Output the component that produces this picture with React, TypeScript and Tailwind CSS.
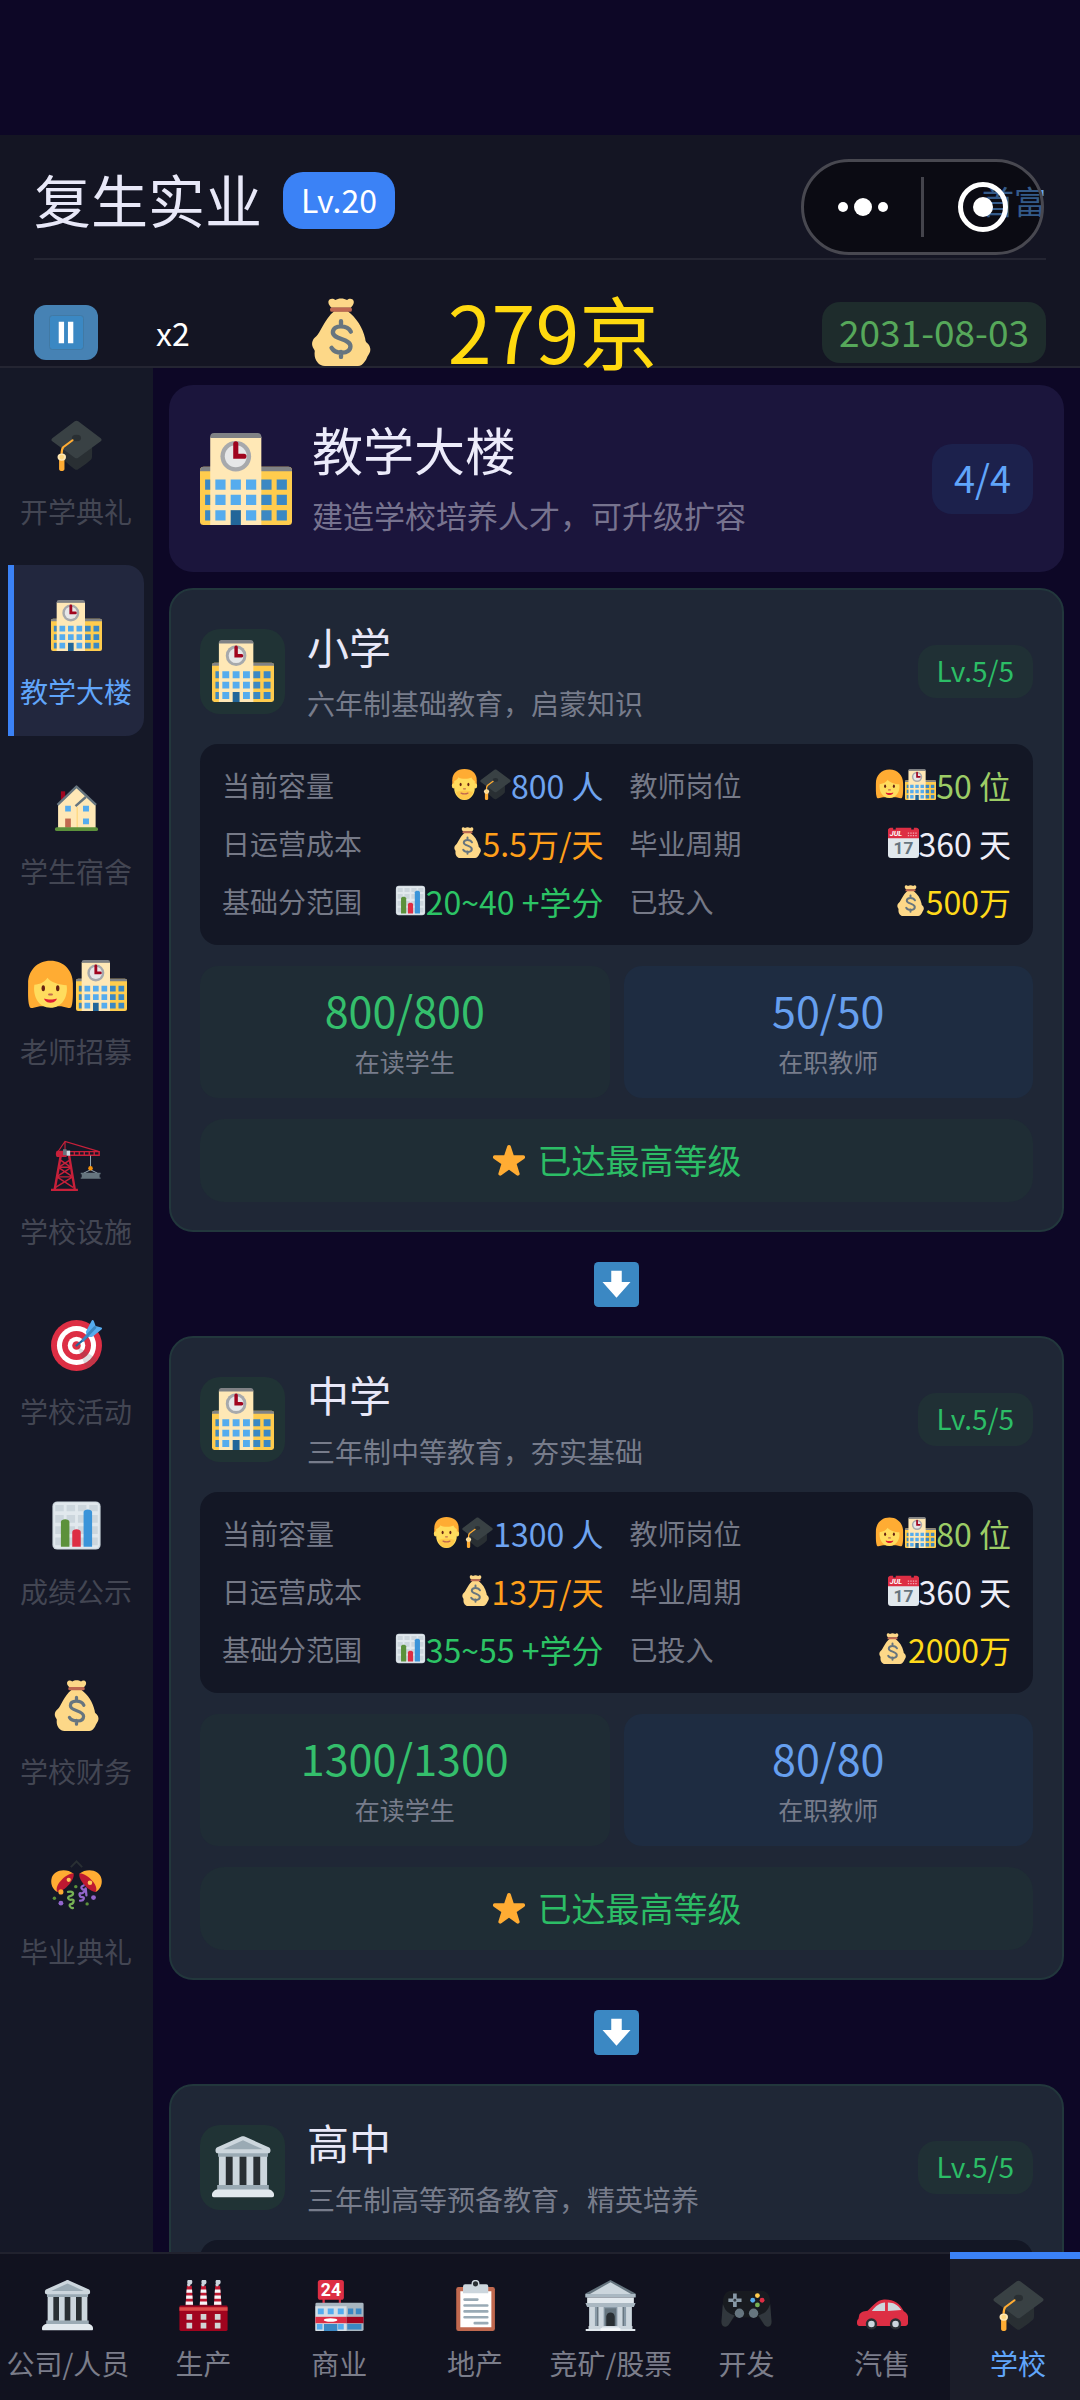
import React from "react";

type IconProps = { className?: string };
type Icon = (props: IconProps) => React.ReactElement;

function Glyph({ className, children }: { className?: string; children: React.ReactNode }) {
  return (
    <svg viewBox="0 0 36 36" className={className} aria-hidden="true">
      {children}
    </svg>
  );
}

const CapIcon: Icon = ({ className }) => (
  <Glyph className={className}>
    <path fill="#292F33" d="M7 17v9c0 1.200 9 8.300 10 8.900.700.400 1.400.400 2 0 1-.600 8.700-6 9.600-7.400.500-.900.300-2 .400-3.500V16z" />
    <path fill="#394144" d="M16.800.900.900 12.800c-.800.600-.800 1.600 0 2.200l15.900 11.600c.700.500 1.700.500 2.400 0L35.100 15c.800-.600.800-1.600 0-2.200L19.200.900c-.700-.500-1.700-.500-2.400 0z" />
    <ellipse cx="18" cy="12.700" rx="3.200" ry="2.300" fill="#292F33" />
    <path fill="none" stroke="#FFAC33" strokeWidth="1.500" strokeLinecap="round" d="M15.200 14.300 8.600 19.200Q7.500 20.500 7.500 24" />
    <path fill="#FFAC33" d="M5.700 27h3.800v7.500c0 2-3.800 2-3.800 0z" />
    <ellipse cx="7.600" cy="26.200" rx="3" ry="2.600" fill="#FFE8B6" />
    <circle cx="7.600" cy="26.200" r="1.700" fill="#FFD983" />
  </Glyph>
);

const SchoolIcon: Icon = ({ className }) => (
  <Glyph className={className}>
    <rect y="13.200" width="36" height="22.800" rx="1.400" fill="#FFCC4D" />
    <path fill="#808285" d="M1.500 13.200h33A1.500 1.500 0 0 1 36 14.700V15H0v-.300a1.500 1.500 0 0 1 1.500-1.500z" />
    <path fill="#FFE8B6" d="M4 1.500h20V36H4z" />
    <path fill="#808285" d="M5.500 0h17A1.500 1.500 0 0 1 24 1.500V2H4v-.500A1.500 1.500 0 0 1 5.500 0z" />
    <circle cx="14" cy="9.100" r="6" fill="#A7A9AC" />
    <circle cx="14" cy="9.100" r="4.300" fill="#E6E7E8" />
    <path fill="none" stroke="#A0041E" strokeWidth="2" strokeLinecap="round" d="M14 4.200v4.900h3.200" />
    <path fill="#3B88C3" d="M2 18.200h2v4H2zM24 18.200h4v4h-4zM30 18.200h4v4h-4zM2 24.200h2v4H2zM24 24.200h4v4h-4zM30 24.200h4v4h-4zM2 30.200h2v4H2zM24 30.200h4v4h-4zM30 30.200h4v4h-4z" />
    <path fill="#55ACEE" d="M6 18.200h4v4H6zM12 18.200h4v4h-4zM18 18.200h4v4h-4zM6 24.200h4v4H6zM12 24.200h4v4h-4zM18 24.200h4v4h-4zM6 30.200h4v4H6zM18 30.200h4v4h-4z" />
    <path fill="#269" d="M12 30.200h4V36h-4z" />
  </Glyph>
);

const HouseIcon: Icon = ({ className }) => (
  <Glyph className={className}>
    <path fill="#A0041E" d="M7 8h3v7H7z" />
    <path fill="#FFE8B6" d="M5 17 18 5l13.500 12v17H5z" />
    <path fill="#FFD983" d="M18 19h1v15h-1z" />
    <path fill="none" stroke="#66757F" strokeWidth="1.700" strokeLinejoin="round" d="m4.600 17.600L18 4.600l13.800 13" />
    <path fill="none" stroke="#66757F" strokeWidth="1.700" d="m17.300 18.400 7.300-6.400" />
    <path fill="#55ACEE" d="M10 18.200h4v4h-4zM22.600 18.200h4.200v4h-4.200zM22.600 27.200h4.200v4h-4.200z" />
    <path fill="#C1694F" d="M10 27.200h4v6.500h-4z" />
    <rect x="2.800" y="33.300" width="30.400" height="2.700" rx="1.300" fill="#5C913B" />
  </Glyph>
);

const WomanIcon: Icon = ({ className }) => (
  <Glyph className={className}>
    <path fill="#FFAC33" d="M18 .500C8.500.500 2.200 7.500 2.200 16.500c0 6-.300 12 .900 16 .300 1.200 1 1.600 2.200 1.400l5.200-1.200h15l5.200 1.200c1.200.200 1.900-.200 2.200-1.400 1.200-4 .900-10 .900-16C33.800 7.500 27.500.500 18 .500z" />
    <path fill="#FFDC5D" d="M6.600 17.500c4-.200 8-2.500 9.200-5 2 3.200 8.500 5 13.600 5.300 1.200 7.700-2.900 15.900-11.400 15.900S5.400 25.500 6.600 17.500z" />
    <ellipse cx="12.900" cy="20" rx="1.200" ry="2.100" fill="#662113" />
    <ellipse cx="23.100" cy="20" rx="1.200" ry="2.100" fill="#662113" />
    <path fill="none" stroke="#C1694F" strokeWidth="1.400" strokeLinecap="round" d="M17 24.300h2" />
    <path fill="#DF1F32" d="M13.800 27.200c2 .900 6.400.900 8.400 0 .700.400-.900 3-4.200 3s-4.900-2.600-4.200-3z" />
  </Glyph>
);

const ManIcon: Icon = ({ className }) => (
  <Glyph className={className}>
    <path fill="#FFAC33" d="M18 0C9 0 3.800 5.500 3.800 13v7h28.400v-7C32.200 5.500 27 0 18 0z" />
    <ellipse cx="5.300" cy="19.500" rx="2" ry="3" fill="#FFDC5D" />
    <ellipse cx="30.700" cy="19.500" rx="2" ry="3" fill="#FFDC5D" />
    <path fill="#FFDC5D" d="M6 14c3-1 4.500-3 5-4.500 2 2.200 11 2.800 15 .500 1 2 2.500 3.500 4 4v8c0 8-5.500 14-12 14S6 30 6 22z" />
    <path fill="#FFC84A" d="M8 26c2 1 4-1 10-1s8 2 10 1c-1.500 6-5.500 9.500-10 9.500S9.500 32 8 26z" />
    <ellipse cx="13.500" cy="18" rx="1.200" ry="2.100" fill="#662113" />
    <ellipse cx="22.500" cy="18" rx="1.200" ry="2.100" fill="#662113" />
    <path fill="none" stroke="#C1694F" strokeWidth="1.500" strokeLinecap="round" d="M17 23h2M14 28c2 1 6 1 8 0" />
  </Glyph>
);

const CraneIcon: Icon = ({ className }) => (
  <Glyph className={className}>
    <g fill="none" stroke="#C8203A">
      <path strokeWidth="1.700" d="M2.600 35 6.900 11M16.800 35 12.800 11M0 35.200h19" />
      <path strokeWidth="1" d="m6.500 14 7.200 5M13.500 14l-7.700 5M5.400 19.500l9.200 6M14.200 19.500l-9.600 6M4.200 26l11.400 7.500M15.300 26 3.200 33.500M5 19.200h9M4 26h11.500" />
      <path strokeWidth=".8" d="M4.500 8.800 9.900 1l23.600 7M9.900 1v8" />
      <path strokeWidth="1" d="M13 8.200h21v2.600H13zM16.500 8.200v2.600M20 8.200v2.600M23.500 8.200v2.600M27 8.200v2.600M30.500 8.200v2.600" />
    </g>
    <path fill="#C8203A" d="M4.500 7.500h6.500V12H4.500c-1.400 0-1.400-4.500 0-4.500z" />
    <path fill="#66757F" d="M8.500 6.500H11v4.200H8.500z" />
    <path fill="#CCD6DD" d="M11 7.500h2.500v3.600H11z" />
    <path stroke="#99AAB5" strokeWidth=".7" d="M27.900 11v8M27.900 21l-5 2.500M27.900 21l5 2.500" />
    <circle cx="27.900" cy="20" r="1.600" fill="#F4900C" />
    <path fill="#66757F" d="M21 23.200h14v1h-.700v2.200h.700v1H21v-1h.700v-2.200H21z" />
  </Glyph>
);

const TargetIcon: Icon = ({ className }) => (
  <Glyph className={className}>
    <circle cx="18" cy="18" r="18" fill="#DD2E44" />
    <circle cx="18" cy="18" r="13.800" fill="#FFF" />
    <circle cx="18" cy="18" r="10.200" fill="#DD2E44" />
    <circle cx="18" cy="18" r="6.200" fill="#FFF" />
    <circle cx="18" cy="18" r="3" fill="#DD2E44" />
    <path fill="#58595B" opacity=".2" d="m18.200 18.300 6.900 15.900c3-1.400 5.700-3.900 7.500-6.700z" />
    <path fill="none" stroke="#269" strokeWidth="1.600" strokeLinecap="round" d="m18 18 9-7.500" />
    <path fill="#55ACEE" d="m24.600 8.300 3.900-7.500c.500-1 1.300-1 1.800.100l1.200 3.400 4 1c.800.200.700 1-.1 1.600l-5.900 4.700c-1.200.700-3.200.400-4.200-.100z" />
    <path fill="none" stroke="#3A87C2" strokeWidth="2" strokeLinecap="round" d="m22.500 14.300 8.500-9" />
  </Glyph>
);

const ChartIcon: Icon = ({ className }) => (
  <Glyph className={className}>
    <rect x="1" y="1" width="34" height="34" rx="3.500" fill="#CCD6DD" />
    <rect x="1.800" y="1.800" width="32.400" height="32.400" rx="3" fill="#E1E8ED" />
    <path fill="#CCD6DD" d="M3 3.500h6V8H3zM11 3.500h6V8h-6zM19 3.500h6V8h-6zM27 3.500h6V8h-6zM3 10.500h6V16H3zM11 10.500h6V16h-6zM19 10.500h6V16h-6zM27 10.500h6V16h-6zM3 18.500h6V24H3zM11 18.500h6V24h-6zM19 18.500h6V24h-6zM27 18.500h6V24h-6zM3 26.500h6V32H3zM11 26.500h6V32h-6zM19 26.500h6V32h-6zM27 26.500h6V32h-6z" />
    <path fill="#5C913B" d="M7 15.500c0-2.500 6-2.500 6 0V33H7z" />
    <path fill="#DD2E44" d="M15 22.500c0-2.500 6-2.500 6 0V33h-6z" />
    <path fill="#3B94D9" d="M23 8.500c0-2.500 6-2.500 6 0V33h-6z" />
  </Glyph>
);

const BagIcon: Icon = ({ className }) => (
  <Glyph className={className}>
    <path fill="#FDD888" d="M14.400 7h7.200c4.300 3.300 8 8.500 9.200 14.500.2 1.200.1 1.600 1 2.300 1.700 1.300 2.500 4 .8 6.200-.800 1-1 2.300-1.900 3.500C29.300 35.300 28.500 36 27 36H9.500C6.300 36 4 33 4 29.500c0-1 .4-1.500-.400-2.500-1.600-2.300-1-5 1.200-6.600C7 18.500 9.300 11 14.400 7z" />
    <path fill="#FDD888" d="M13 5.200c-.800-1-2-2-1.600-3.600.5-1.500 2.600-1.500 3.600-.500 1.600-1.200 4.500-1.200 6.200 0 1-1 3-1 3.500.500.400 1.600-.700 2.600-1.500 3.600z" />
    <rect x="12.200" y="5" width="11.600" height="2.300" rx="1" fill="#BF6952" />
    <path fill="none" stroke="#67757F" strokeWidth="2.300" strokeLinecap="round" d="M18 12.300v2.600M18 28.500v2.700M23.200 17.800c-1.800-3.700-9.300-3.900-9.500.3-.2 3.900 9.300 3.300 9.300 7.400 0 4.500-8 4.300-10 .9" />
  </Glyph>
);

const ConfettiIcon: Icon = ({ className }) => (
  <Glyph className={className}>
    <path fill="none" stroke="#292F33" strokeWidth="1.400" d="m14 5 4-4 4 4" />
    <path fill="#FFAC33" d="M15.800 9.500C11 5.500 1.500 6.500.300 13.500c-.7 4 1.300 7.500 4.200 9z" />
    <path fill="#BE1931" d="M15.800 9.400c1.800 3.600-6 13-11.300 13.100-2.600-3.700 5-12.500 11.300-13.100z" />
    <path fill="#FFAC33" d="M20.200 9.500C25 5.500 34.500 6.500 35.700 13.500c.7 4-1.300 7.500-4.200 9z" />
    <path fill="#BE1931" d="M20.200 9.400c-1.800 3.600 6 13 11.300 13.100 2.600-3.700-5-12.500-11.300-13.100z" />
    <circle cx="12.500" cy="14" r="1.500" fill="#FDCB58" />
    <circle cx="27.500" cy="16" r="1.600" fill="#FDCB58" />
    <circle cx="7" cy="22.500" r="1.800" fill="#FFAC33" />
    <path fill="none" stroke="#77B255" strokeWidth="1.600" strokeLinecap="round" d="M12 22.500c5-1 4 2.500 1.500 3s-1.500 3 1 2.500 1.500 3-.5 3.200 0 3.300 1.500 2.600" />
    <path fill="none" stroke="#9266CC" strokeWidth="1.600" strokeLinecap="round" d="M23 18c-3 1-1 3 .5 3s-1 3-2.500 2.500-1 3 1 2.700 1.500 2.800-1.500 2.500M24.500 20l.5 5" />
    <circle cx="2.400" cy="27" r="1.200" fill="#5C913B" />
    <circle cx="7" cy="30.500" r="1.700" fill="#9266CC" />
    <circle cx="30" cy="26.500" r="1.700" fill="#9266CC" />
    <circle cx="25.500" cy="31" r="1.200" fill="#5C913B" />
    <circle cx="17.500" cy="18.800" r="1.200" fill="#5C913B" />
  </Glyph>
);

const MuseumIcon: Icon = ({ className }) => (
  <Glyph className={className}>
    <path fill="#292F33" d="M4 11h28v18H4z" />
    <path fill="#CCD6DD" d="M4 11h4v18H4zM12 11h4v18h-4zM20 11h4v18h-4zM28 11h4v18h-4z" />
    <path fill="#9AAAB4" d="M3.500 9h29v3h-29zM3 28.500h30V32H3z" />
    <path fill="#CCD6DD" d="M17 .300c.600-.300 1.400-.300 2 0l14.200 6.400c1 .5 1.100 3.300-.2 3.300H3c-1.300 0-1.200-2.800-.2-3.300z" />
    <path fill="#9AAAB4" d="m18 2.500 11.500 5.200h-23z" />
    <path fill="#E1E8ED" d="M2.500 31h31c3 1.200 3.300 4.500 1.500 4.500H1c-1.800 0-1.500-3.300 1.500-4.500z" />
  </Glyph>
);

const FactoryIcon: Icon = ({ className }) => (
  <Glyph className={className}>
    {[8, 18, 28].map((x) => (
      <g key={x} transform={`translate(${x} 0)`}>
        <path fill="#BE1931" d="M-1.700 4h3.400l1 14h-5.400z" />
        <path fill="#F5F8FA" d="M-1.900 6.700h3.800l.2 2.300h-4.200zM-2.200 11h4.400l.1 2.300h-4.600zM-2.500 15.200h5l.1 2.200h-5.200z" />
        <circle cx=".3" cy="1.400" r="1.800" fill="#CCD6DD" />
        <circle cx="-.4" cy="3.300" r="1.200" fill="#CCD6DD" />
      </g>
    ))}
    <rect x="1" y="18" width="34" height="18" rx="1" fill="#A0041E" />
    <path fill="#DD4B4B" d="M1 19.300h34v2.400H1z" />
    <path fill="#D1D3D4" d="M6 24h4v4H6zM16 24h4v4h-4zM26 24h4v4h-4zM6 30.200h4v4H6zM16 30.200h4v4h-4zM26 30.200h4v4h-4z" />
  </Glyph>
);

const StoreIcon: Icon = ({ className }) => (
  <Glyph className={className}>
    <path fill="#DD2E44" d="M6 13h1.600v4H6zM17.500 13H19v4h-1.500z" />
    <rect x="2.700" width="18.400" height="14" rx="1.800" fill="#DD2E44" />
    <text x="12" y="11.500" textAnchor="middle" fontSize="12.500" fontWeight="700" fontFamily="Roboto, 'Liberation Sans', sans-serif" fill="#FFF">24</text>
    <rect x="1" y="16" width="34" height="20" rx="1" fill="#A8B6C0" />
    <path fill="#D5DEE4" d="M1 18.500h22V36H1z" />
    <path fill="#DD2E44" d="M1 26h22v4.500H1z" />
    <path fill="#A0041E" d="M23 26h12v4.500H23z" />
    <ellipse cx="11.700" cy="28.200" rx="4.800" ry="1.200" fill="#FFF" />
    <path fill="#55ACEE" d="M2.700 20.200h4.200v4H2.700zM9.700 20.200h4.200v4H9.700zM16.800 20.200H21v4h-4.200zM2 31h4v4H2zM17 31h4v4h-4z" />
    <path fill="#3B88C3" d="M24 20.200h3.700v4H24zM29.500 20.200h4v4h-4zM7 31h9.500v5H7zM23.500 31h10v4h-10z" />
  </Glyph>
);

const ClipboardIcon: Icon = ({ className }) => (
  <Glyph className={className}>
    <rect x="4.400" y="5" width="27.300" height="31" rx="1.600" fill="#C1694F" />
    <path fill="#FFF" d="M7.300 8h21.900v25.300H7.300z" />
    <path fill="#CCD6DD" d="M9.200 4.500a1.500 1.500 0 0 1 1.500-1.500h14.700A1.500 1.500 0 0 1 27 4.500v4.800H9.200z" />
    <circle cx="18" cy="2.700" r="2.300" fill="#292F33" stroke="#CCD6DD" strokeWidth="1" />
    <path stroke="#99AAB5" strokeWidth="1.900" strokeLinecap="round" d="M10.300 13.800h9M10.300 18h16M10.300 22.200h16M10.300 26.300h16M17.500 30.500h8.800" />
  </Glyph>
);

const BankIcon: Icon = ({ className }) => (
  <Glyph className={className}>
    <path fill="#8899A6" d="M3 17h30v17H3z" />
    <path fill="#66757F" d="M8.500 19h4.500v14H8.500zM23 19h4.500v14H23zM14 20h8v13h-8z" />
    <path fill="#CCD6DD" d="M3 18h4v15H3zM9.500 18h3.700v15H9.500zM22.800 18h3.700v15h-3.700zM29 18h4v15h-4z" />
    <path fill="#292F33" d="M15 26c0-4 6-4 6 0v7h-6z" />
    <path fill="#66757F" d="M18 0 .3 9.500V12h35.400V9.500z" />
    <path fill="#CCD6DD" d="m18 1.600 14.500 8.200h-29z" />
    <path fill="#AAB8C2" d="M.300 9.800h35.400v2.600H.300z" />
    <path fill="#E1E8ED" d="M1.500 12.400h33v3.800h-33z" />
    <path fill="#AAB8C2" d="M.300 16.200h35.400L34.500 19h-33z" />
    <path fill="#CCD6DD" d="M2.500 32.500h31v2h-31z" />
    <path fill="#E1E8ED" d="M.500 34.500h35V36H.500zM12 33h12v1H12z" />
    <path fill="#F5F8FA" d="M11 34h14v2H11z" />
  </Glyph>
);

const GamepadIcon: Icon = ({ className }) => (
  <Glyph className={className}>
    <path fill="#181B20" d="M7 7.500h22c3 0 5 2.500 5.500 6l1.200 16c.3 4.500-4 4.500-5.700 1.500l-3.500-4.500h-17L6 31c-1.700 3-6 3-5.700-1.500l1.200-16C2 10 4 7.500 7 7.500z" />
    <path fill="#31373D" d="M1.300 17c2 6 5 7 8.300 8L5.800 31C4 34 .300 33.500.300 29.500zM34.700 17c-2 6-5 7-8.300 8l3.800 6c1.800 3 5.500 2.500 5.500-1.500z" />
    <path fill="#8899A6" d="M8.500 9.500h2.600V13h3.400v2.600h-3.400V19H8.500v-3.400H5.200V13h3.300z" />
    <circle cx="9.800" cy="14.300" r="1" fill="#31373D" />
    <circle cx="13" cy="23.500" r="3.300" fill="#66757F" />
    <circle cx="23" cy="23.500" r="3.300" fill="#66757F" />
    <circle cx="25.700" cy="11" r="1.700" fill="#FFCC4D" />
    <circle cx="22.400" cy="14.300" r="1.700" fill="#55ACEE" />
    <circle cx="29" cy="14.300" r="1.700" fill="#DD2E44" />
    <circle cx="25.700" cy="17.600" r="1.700" fill="#77B255" />
  </Glyph>
);

const CarIcon: Icon = ({ className }) => (
  <Glyph className={className}>
    <path fill="#DD2E44" d="M1.500 25c.6-2.300 3-3 6-3.300 3-2.500 6.500-7.700 11.500-7.900 7-.3 11 2.500 14 8.200 2.500 1.300 3.300 3 3.200 6.500 0 2.500-.4 4-2.200 4H2.500C.500 32.500-.200 31.500 0 29.500c.100-1 .3-1.500 1-2z" />
    <path fill="#CCD6DD" d="M10.500 21.800c3-3.800 5.300-5.700 9.300-6v6zM21.800 15.800c4.500.1 7 1.700 9.500 5.400l-9.500.6z" />
    <circle cx="10.200" cy="31" r="4" fill="#292F33" />
    <circle cx="10.200" cy="31" r="2.300" fill="#CCD6DD" />
    <circle cx="27.200" cy="31" r="4" fill="#292F33" />
    <circle cx="27.200" cy="31" r="2.300" fill="#CCD6DD" />
  </Glyph>
);

const CalendarIcon: Icon = ({ className }) => (
  <Glyph className={className}>
    <rect y="2" width="36" height="34" rx="3.500" fill="#E1E8ED" />
    <path fill="#DD2E44" d="M0 4c0-1.800 1.500-3 3-3h30c1.500 0 3 1.200 3 3v9H0z" />
    <path fill="#141726" d="M6 0h3v3H6zM27 0h3v3h-3z" />
    <text x="2" y="11" fontSize="8.500" fontWeight="700" fontStyle="italic" fontFamily="Roboto, 'Liberation Sans', sans-serif" fill="#FFF">JUL</text>
    <path stroke="#F4A9B3" strokeWidth="1.500" strokeDasharray="1.600 1.300" d="M23 7h11M23 10h11" />
    <text x="18" y="31" textAnchor="middle" fontSize="20" fontWeight="700" fontFamily="Roboto, 'Liberation Sans', sans-serif" fill="#66757F">17</text>
  </Glyph>
);

const StarIcon: Icon = ({ className }) => (
  <Glyph className={className}>
    <path fill="#FFAC33" d="M27.287 34.627c-.404 0-.806-.124-1.152-.371L18 28.422l-8.135 5.834a1.970 1.970 0 0 1-2.312-.008 1.971 1.971 0 0 1-.721-2.194l3.034-9.792-8.062-5.681a1.980 1.980 0 0 1-.708-2.203 1.978 1.978 0 0 1 1.866-1.363L12.947 13l3.179-9.549a1.976 1.976 0 0 1 3.749 0L23 13l10.036.015a1.975 1.975 0 0 1 1.159 3.566l-8.062 5.681 3.034 9.792a1.970 1.970 0 0 1-.720 2.194 1.957 1.957 0 0 1-1.160.379z" />
  </Glyph>
);

const DownIcon: Icon = ({ className }) => (
  <Glyph className={className}>
    <rect width="36" height="36" rx="3.500" fill="#3B88C3" />
    <path fill="#FFF" d="M13.800 7h8.400v9h7L18 28.500 6.800 16h7z" />
  </Glyph>
);

const PauseIcon: Icon = ({ className }) => (
  <Glyph className={className}>
    <rect x=".5" y=".5" width="35" height="35" rx="3" fill="#3B88C3" stroke="#4179A3" />
    <path fill="#FFF" d="M10 7h5.500v22H10zM19.500 7H25v22h-5.500z" />
  </Glyph>
);

const sections: { label: string; icons: Icon[]; active?: boolean }[] = [
  { label: "开学典礼", icons: [CapIcon] },
  { label: "教学大楼", icons: [SchoolIcon], active: true },
  { label: "学生宿舍", icons: [HouseIcon] },
  { label: "老师招募", icons: [WomanIcon, SchoolIcon] },
  { label: "学校设施", icons: [CraneIcon] },
  { label: "学校活动", icons: [TargetIcon] },
  { label: "成绩公示", icons: [ChartIcon] },
  { label: "学校财务", icons: [BagIcon] },
  { label: "毕业典礼", icons: [ConfettiIcon] },
];

const tabs: { label: string; icon: Icon; active?: boolean }[] = [
  { label: "公司/人员", icon: MuseumIcon },
  { label: "生产", icon: FactoryIcon },
  { label: "商业", icon: StoreIcon },
  { label: "地产", icon: ClipboardIcon },
  { label: "竞矿/股票", icon: BankIcon },
  { label: "开发", icon: GamepadIcon },
  { label: "汽售", icon: CarIcon },
  { label: "学校", icon: CapIcon, active: true },
];

type School = {
  name: string;
  description: string;
  icon: Icon;
  facts: { label: string; value: string; icons: Icon[]; color: string }[];
  students?: string;
  teachers?: string;
};

const schools: School[] = [
  {
    name: "小学",
    description: "六年制基础教育，启蒙知识",
    icon: SchoolIcon,
    facts: [
      { label: "当前容量", value: "800 人", icons: [ManIcon, CapIcon], color: "text-[#6ea3f0]" },
      { label: "教师岗位", value: "50 位", icons: [WomanIcon, SchoolIcon], color: "text-[#9ccc65]" },
      { label: "日运营成本", value: "5.5万/天", icons: [BagIcon], color: "text-[#ff9f1a]" },
      { label: "毕业周期", value: "360 天", icons: [CalendarIcon], color: "text-[#eeeef8]" },
      { label: "基础分范围", value: "20~40 +学分", icons: [ChartIcon], color: "text-[#2cc465]" },
      { label: "已投入", value: "500万", icons: [BagIcon], color: "text-[#ffd91a]" },
    ],
    students: "800/800",
    teachers: "50/50",
  },
  {
    name: "中学",
    description: "三年制中等教育，夯实基础",
    icon: SchoolIcon,
    facts: [
      { label: "当前容量", value: "1300 人", icons: [ManIcon, CapIcon], color: "text-[#6ea3f0]" },
      { label: "教师岗位", value: "80 位", icons: [WomanIcon, SchoolIcon], color: "text-[#9ccc65]" },
      { label: "日运营成本", value: "13万/天", icons: [BagIcon], color: "text-[#ff9f1a]" },
      { label: "毕业周期", value: "360 天", icons: [CalendarIcon], color: "text-[#eeeef8]" },
      { label: "基础分范围", value: "35~55 +学分", icons: [ChartIcon], color: "text-[#2cc465]" },
      { label: "已投入", value: "2000万", icons: [BagIcon], color: "text-[#ffd91a]" },
    ],
    students: "1300/1300",
    teachers: "80/80",
  },
  {
    name: "高中",
    description: "三年制高等预备教育，精英培养",
    icon: MuseumIcon,
    facts: [],
  },
];

function Header() {
  return (
    <header className="relative border-b-2 border-[#242532] bg-[#141523] px-[34px] pt-4">
      <div className="flex h-[109px] items-center border-b-2 border-[#242532] pb-[9px]">
        <h1 className="pb-1 text-[57px] leading-[64px] text-[#e8e8f8]">复生实业</h1>
        <span className="ml-[21px] rounded-[20px] bg-[#3b82f6] px-[18px] pb-0.5 text-[32px] leading-[55px] text-white">Lv.20</span>
        <span className="ml-auto text-[32px] leading-10 text-[#60a5fa]">首富</span>
      </div>
      <div className="flex h-[106px] items-center pt-[38px]">
        <button type="button" aria-label="暂停" className="flex h-[55px] w-16 items-center justify-center rounded-xl bg-[#4682b4]">
          <PauseIcon className="size-[35px]" />
        </button>
        <button type="button" className="ml-[58px] text-[32px] leading-10 text-white">x2</button>
        <BagIcon className="ml-[117px] size-[68px]" />
        <span className="ml-[73px] pb-1 text-[79px] leading-[64px] text-[#ffd90f]">279京</span>
        <time dateTime="2031-08-03" className="ml-auto rounded-[18px] bg-[#1e2c2c] px-[17px] pb-0.5 text-[37px] leading-[59px] text-[#56a85a]">
          2031-08-03
        </time>
      </div>
      <div className="absolute top-6 right-9 flex h-24 w-[243px] items-center rounded-full border-3 border-[#484850] bg-black/45">
        <button type="button" aria-label="更多" className="flex h-full flex-1 items-center justify-center gap-1.5 text-white">
          <i className="size-2.5 rounded-full bg-current" />
          <i className="size-[18px] rounded-full bg-current" />
          <i className="size-2.5 rounded-full bg-current" />
        </button>
        <span className="h-[60px] w-[3px] bg-[#44444c]" />
        <button type="button" aria-label="关闭" className="flex h-full flex-1 items-center justify-center">
          <span className="flex size-[50px] items-center justify-center rounded-full border-5 border-white">
            <i className="size-5 rounded-full bg-white" />
          </span>
        </button>
      </div>
    </header>
  );
}

function Sidebar() {
  return (
    <nav aria-label="学校管理" className="flex w-[153px] shrink-0 flex-col gap-[9px] bg-[#151827] px-2 pt-[17px]">
      {sections.map(({ label, icons, active }) => (
        <button
          key={label}
          type="button"
          className={`flex h-[171px] w-[136px] shrink-0 flex-col items-center rounded-[18px] pt-[35px] ${
            active
              ? "rounded-l-none border-l-6 border-[#3b82f6] bg-[#22273e] pr-1.5 text-[#60a5fa]"
              : "text-[#434653]"
          }`}
        >
          <span className="flex">
            {icons.map((Part, i) => (
              <Part key={i} className="size-[51px]" />
            ))}
          </span>
          <span className="mt-5 text-[28px] leading-10 whitespace-nowrap">{label}</span>
        </button>
      ))}
    </nav>
  );
}

function SchoolCard({ school }: { school: School }) {
  const { name, description, icon: Badge, facts, students, teachers } = school;
  return (
    <article className="flex flex-col gap-[21px] rounded-3xl border-2 border-[#22373c] bg-[#1f2736] px-[29px] pt-[29px] pb-7">
      <div className="flex h-[104px] items-center">
        <span className="flex size-[85px] items-center justify-center rounded-[20px] bg-[#203335]">
          <Badge className="size-[62px]" />
        </span>
        <div className="ml-[22px] flex-1">
          <h3 className="text-[42px] leading-[54px] text-[#e8e8f8]">{name}</h3>
          <p className="mt-2.5 text-[28px] leading-10 text-[#777c8b]">{description}</p>
        </div>
        <span className="rounded-[18px] bg-[#203035] px-[19px] pb-0.5 text-[28px] leading-[51px] text-[#2cbd66]">Lv.5/5</span>
      </div>
      <dl className="grid min-h-[201px] grid-cols-2 content-start gap-x-[26px] gap-y-[13px] rounded-[18px] bg-[#131725] px-[22px] pt-[18px] pb-[22px]">
        {facts.map(({ label, value, icons, color }) => (
          <div key={label} className="flex h-[45px] items-center justify-between whitespace-nowrap">
            <dt className="text-[28px] leading-10 text-[#757987]">{label}</dt>
            <dd className={`flex items-center text-[32px] leading-10 ${color}`}>
              {icons.map((Part, i) => (
                <Part key={i} className="size-[31px]" />
              ))}
              {value}
            </dd>
          </div>
        ))}
      </dl>
      {students && teachers && (
        <>
          <div className="grid grid-cols-2 gap-3.5 text-center">
            <div className="rounded-[18px] bg-[#1f2c35] pt-[17px] pb-5">
              <p className="text-[43px] leading-[52px] text-[#34bf6c]">{students}</p>
              <p className="mt-[9px] text-[25px] leading-[34px] text-[#777c8b]">在读学生</p>
            </div>
            <div className="rounded-[18px] bg-[#1e2c41] pt-[17px] pb-5">
              <p className="text-[43px] leading-[52px] text-[#669fee]">{teachers}</p>
              <p className="mt-[9px] text-[25px] leading-[34px] text-[#777c8b]">在职教师</p>
            </div>
          </div>
          <p className="flex h-[83px] items-center justify-center gap-3 rounded-3xl bg-[#1f2d35] pb-0.5 text-[34px] leading-10 text-[#2cbd66]">
            <StarIcon className="size-[34px]" />
            已达最高等级
          </p>
        </>
      )}
    </article>
  );
}

function TabBar() {
  return (
    <nav aria-label="主导航" className="flex h-[148px] shrink-0 overflow-hidden bg-[#11121f]">
      {tabs.map(({ label, icon: Part, active }) => (
        <button
          key={label}
          type="button"
          className={`flex shrink-0 basis-[12.57%] flex-col items-center whitespace-nowrap ${
            active
              ? "border-t-7 border-[#3b82f6] bg-[#1b1d29] pt-[21px] text-[#60a5fa]"
              : "border-t-2 border-[#21222e] pt-[26px] text-[#7b7d8a]"
          }`}
        >
          <Part className="size-[51px]" />
          <span className="mt-3 text-[28px] leading-10">{label}</span>
        </button>
      ))}
    </nav>
  );
}

export default function App() {
  return (
    <div className="flex h-screen flex-col overflow-hidden bg-[#0d0726] pt-[135px] font-['Noto_Sans_CJK_SC',sans-serif]">
      <Header />
      <div className="flex min-h-0 flex-1">
        <Sidebar />
        <main className="min-w-0 flex-1 overflow-y-auto px-4 pt-[17px] [scrollbar-width:none]">
          <section className="mb-4 flex h-[187px] items-center rounded-3xl bg-[#1b153c] px-[31px]">
            <SchoolIcon className="size-[92px]" />
            <div className="ml-5 flex-1">
              <h2 className="text-[51px] leading-[64px] text-[#ecebfa]">教学大楼</h2>
              <p className="mt-2 text-[31px] leading-[52px] text-[#77738f]">建造学校培养人才，可升级扩容</p>
            </div>
            <span className="rounded-[20px] bg-[#1c214c] px-[22px] pb-1 text-[38px] leading-[66px] text-[#60a5fa]">4/4</span>
          </section>
          {schools.map((school, i) => (
            <React.Fragment key={school.name}>
              {i > 0 && (
                <div className="flex h-[104px] items-center justify-center">
                  <DownIcon className="size-[45px]" />
                </div>
              )}
              <SchoolCard school={school} />
            </React.Fragment>
          ))}
        </main>
      </div>
      <TabBar />
    </div>
  );
}
